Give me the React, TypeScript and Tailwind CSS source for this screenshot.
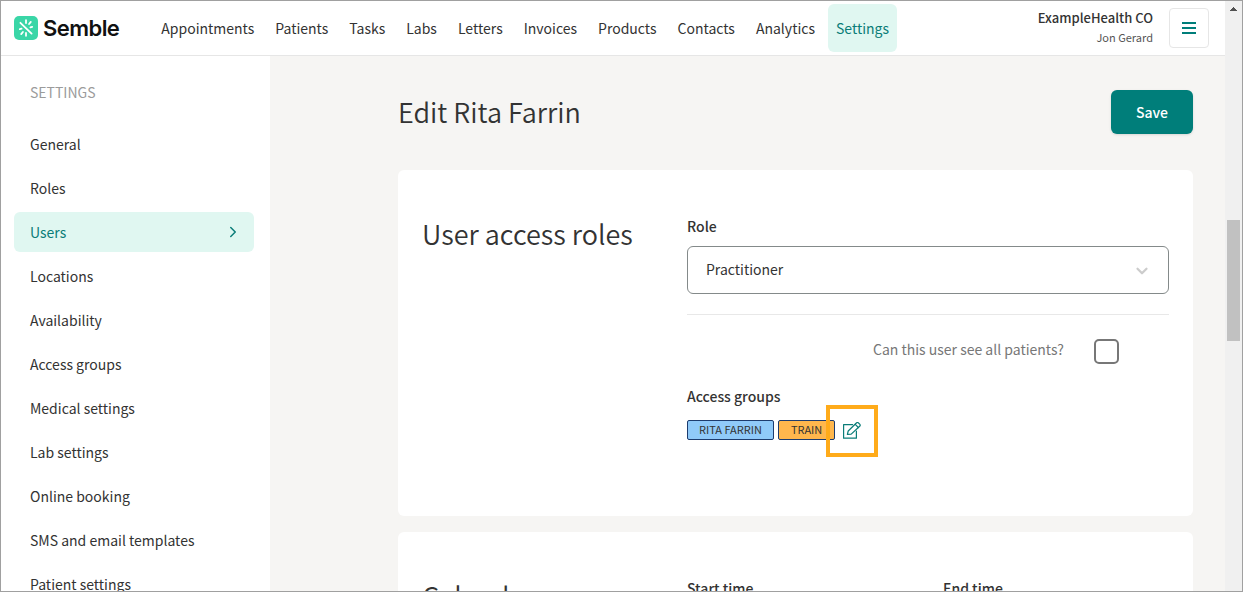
import { ChevronDown, ChevronRight } from "lucide-react";

const navItems = [
  "Appointments",
  "Patients",
  "Tasks",
  "Labs",
  "Letters",
  "Invoices",
  "Products",
  "Contacts",
  "Analytics",
  "Settings",
];

const menuItems = [
  "General",
  "Roles",
  "Users",
  "Locations",
  "Availability",
  "Access groups",
  "Medical settings",
  "Lab settings",
  "Online booking",
  "SMS and email templates",
  "Patient settings",
];

const rays = [0, 38, 180, 218];

function Logo() {
  return (
    <a href="#" className="flex items-center gap-[5px] text-[#111]">
      <svg width="24" height="24" viewBox="0 0 24 24" aria-hidden="true">
        <rect width="24" height="24" rx="5" fill="#3ad6a7" />
        <g stroke="#fff" strokeWidth="1.8" strokeLinecap="round">
          <path d="M6.4 6.8 17.6 17.6" />
          <path d="M5.8 13.2l1.8-.5M16.4 11.3l1.8-.5" />
          {rays.map((angle) => (
            <path key={angle} d="M12 7V4.2" transform={`rotate(${angle} 12 12)`} />
          ))}
        </g>
      </svg>
      <span className="font-['Inter',sans-serif] text-[22px] leading-6 font-semibold tracking-tight">
        Semble
      </span>
    </a>
  );
}

function EditIcon() {
  return (
    <svg
      width="18"
      height="17"
      viewBox="0 0 18 17"
      fill="none"
      stroke="#0b7d78"
      strokeWidth="1.2"
      strokeLinejoin="round"
      strokeLinecap="round"
      aria-hidden="true"
    >
      <path d="M9.6 2.6H.6v13.6h12.8V9" />
      <path d="M4.4 12.4l.8-3.4 8.2-8a1.5 1.5 0 0 1 2.1 0l1.2 1.2a1.5 1.5 0 0 1 0 2.1l-8.5 7.8z" />
      <path d="M12.2 2.3l3.2 3.2" />
    </svg>
  );
}

function Header() {
  return (
    <header className="flex h-[55px] items-center border-b border-[#e6e6e6] bg-white pr-4 pl-[13px]">
      <Logo />
      <nav className="ml-[34px] flex gap-[5px]">
        {navItems.map((item) => (
          <a
            key={item}
            href="#"
            className={
              item === "Settings"
                ? "rounded-md bg-[#e0f7f1] px-2 py-3 leading-6 text-[#0b7d78]"
                : "px-2 py-3 leading-6"
            }
          >
            {item}
          </a>
        ))}
      </nav>
      <div className="ml-auto pb-0.5 text-right">
        <p className="text-[13px] leading-5 font-medium">ExampleHealth CO</p>
        <p className="text-[11px] leading-[18px] text-[#555]">Jon Gerard</p>
      </div>
      <button
        type="button"
        aria-label="Menu"
        className="ml-4 flex size-10 items-center justify-center rounded-sm border border-[#e6e6e6]"
      >
        <svg width="14" height="12" viewBox="0 0 14 12" fill="#007e7a" aria-hidden="true">
          <path d="M0 0h14v2H0zM0 5h14v2H0zM0 10h14v2H0z" />
        </svg>
      </button>
    </header>
  );
}

function Sidebar() {
  return (
    <aside className="w-[269px] shrink-0 bg-white px-[13px] pt-6">
      <h2 className="px-4 leading-6 text-[#9b9b9b]">SETTINGS</h2>
      <nav className="mt-5 flex flex-col gap-1">
        {menuItems.map((item) => (
          <a
            key={item}
            href="#"
            className={
              item === "Users"
                ? "flex h-10 w-60 items-center justify-between rounded-md bg-[#e0f7f1] px-4 text-[#0b7d78]"
                : "flex h-10 w-60 items-center px-4"
            }
          >
            {item}
            {item === "Users" && <ChevronRight size={18} strokeWidth={2} className="-mr-1" />}
          </a>
        ))}
      </nav>
    </aside>
  );
}

function AccessCard() {
  return (
    <section className="flex h-[346px] rounded-md bg-white px-6 pt-11">
      <h2 className="w-[265px] shrink-0 text-[27px] leading-10 font-[350]">User access roles</h2>
      <div className="min-w-0 flex-1">
        <label htmlFor="role" className="block leading-6 font-medium">
          Role
        </label>
        <div className="relative mt-2">
          <select
            id="role"
            className="h-12 w-full appearance-none rounded-md border border-[#848a8a] bg-white px-[18px] pb-0.5"
          >
            <option>Practitioner</option>
          </select>
          <ChevronDown
            size={18}
            strokeWidth={3}
            className="pointer-events-none absolute top-4 right-[18px] text-[#ccc]"
          />
        </div>
        <hr className="mt-5 border-[#e8e8e8]" />
        <div className="mt-6 flex items-start justify-end gap-[30px] pr-[50px]">
          <label htmlFor="all-patients" className="leading-5 text-[#777]">
            Can this user see all patients?
          </label>
          <input
            id="all-patients"
            type="checkbox"
            className="size-[25px] appearance-none rounded-[5px] border-2 border-[#777] bg-white"
          />
        </div>
        <h3 className="mt-5 leading-6 font-medium">Access groups</h3>
        <div className="mt-3 flex h-5 items-center gap-1 text-[11px] leading-4">
          <span className="h-5 rounded-xs border border-[#1d3c6e] bg-[#90caf9] px-[11px]">
            RITA FARRIN
          </span>
          <span className="h-5 rounded-xs border border-[#1d3c6e] bg-[#ffb74d] px-3">TRAIN</span>
          <span className="relative ml-1">
            <button type="button" aria-label="Edit access groups" className="block">
              <EditIcon />
            </button>
            <span className="pointer-events-none absolute -top-[17px] -left-[17px] size-[52px] border-4 border-[#ffab1a]" />
          </span>
        </div>
      </div>
    </section>
  );
}

function CalendarCard() {
  return (
    <section className="mt-4 flex rounded-md bg-white px-6 pt-11">
      <h2 className="w-[265px] shrink-0 text-[27px] leading-10 font-[350]">Calendar</h2>
      <div className="grid flex-1 grid-cols-2 gap-[30px] leading-6 font-medium">
        <p>Start time</p>
        <p>End time</p>
      </div>
    </section>
  );
}

function Scrollbar() {
  return (
    <div className="flex w-[17px] shrink-0 flex-col items-center bg-[#f0f0f0]">
      <svg width="7" height="4" viewBox="0 0 7 4" className="mt-[6px]" fill="#505050" aria-hidden="true">
        <path d="M3 0h1v1h1v1h1v1h1v1H0V3h1V2h1V1h1z" />
      </svg>
      <div className="mt-[209px] h-[121px] w-[13px] bg-[#c1c1c1]" />
    </div>
  );
}

export default function App() {
  return (
    <div className="flex h-screen overflow-hidden border border-[#a0a0a0] bg-[#f6f5f3] font-['Noto_Sans_CJK_SC',sans-serif] text-[14px] text-[#333]">
      <div className="flex min-w-0 flex-1 flex-col">
        <Header />
        <div className="flex min-h-0 flex-1">
          <Sidebar />
          <main className="min-w-0 flex-1 overflow-hidden pr-8 pl-32">
            <div className="flex h-[114px] items-center justify-between pb-0.5">
              <h1 className="text-[27px] leading-10 font-[350]">Edit Rita Farrin</h1>
              <button
                type="button"
                className="h-11 rounded-md bg-[#007e7a] px-[25px] font-medium text-white shadow-sm"
              >
                Save
              </button>
            </div>
            <AccessCard />
            <CalendarCard />
          </main>
        </div>
      </div>
      <Scrollbar />
    </div>
  );
}
